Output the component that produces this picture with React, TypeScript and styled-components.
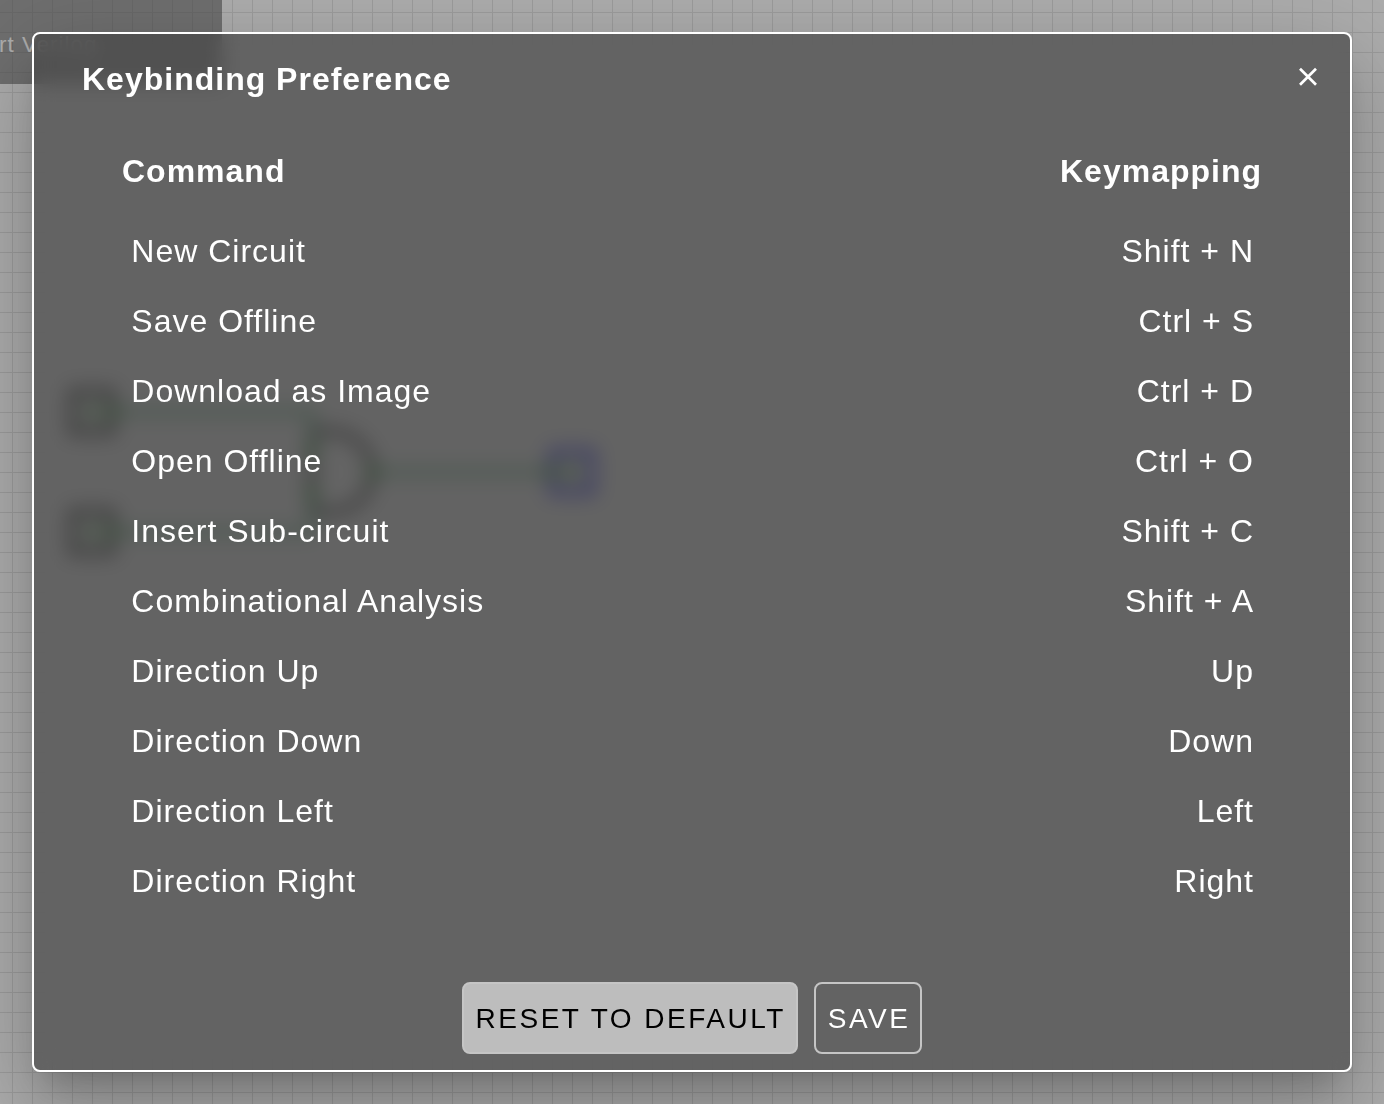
import styled, { createGlobalStyle } from 'styled-components';

interface Keybinding {
  command: string;
  keys: string;
}

const keybindings: Keybinding[] = [
  { command: 'New Circuit', keys: 'Shift + N' },
  { command: 'Save Offline', keys: 'Ctrl + S' },
  { command: 'Download as Image', keys: 'Ctrl + D' },
  { command: 'Open Offline', keys: 'Ctrl + O' },
  { command: 'Insert Sub-circuit', keys: 'Shift + C' },
  { command: 'Combinational Analysis', keys: 'Shift + A' },
  { command: 'Direction Up', keys: 'Up' },
  { command: 'Direction Down', keys: 'Down' },
  { command: 'Direction Left', keys: 'Left' },
  { command: 'Direction Right', keys: 'Right' },
];

const GlobalStyle = createGlobalStyle`
  * {
    box-sizing: border-box;
  }

  body {
    margin: 0;
    overflow: hidden;
    font-family: 'Liberation Sans', Arial, sans-serif;
  }
`;

const Page = styled.div`
  position: relative;
  width: 100vw;
  height: 100vh;
  overflow: hidden;
  background-color: #ffffff;
  background-image: linear-gradient(to right, #e6e6e6 1px, transparent 1px),
    linear-gradient(to bottom, #e6e6e6 1px, transparent 1px);
  background-size: 20px 20px;
  background-position: 12px 12px;
`;

const Circuit = styled.svg`
  position: absolute;
  inset: 0;
  width: 100%;
  height: 100%;
`;

const Menu = styled.div`
  position: absolute;
  top: 0;
  left: 0;
  width: 222px;
  height: 84px;
  padding-top: 31px;
  overflow: hidden;
  background: rgba(104, 104, 104, 0.6);
`;

const MenuItem = styled.span`
  display: block;
  margin-left: -56px;
  font-size: 22.4px;
  line-height: 28px;
  letter-spacing: 1px;
  white-space: nowrap;
  color: #ffffff;
`;

const Overlay = styled.div`
  position: absolute;
  inset: 0;
  display: flex;
  padding: 32px;
  background: rgba(0, 0, 0, 0.32);
`;

const Dialog = styled.div`
  display: flex;
  flex-direction: column;
  flex: 1;
  border: 2px solid #ffffff;
  border-radius: 8px;
  background: rgba(68, 68, 68, 0.7);
  backdrop-filter: blur(10px);
  box-shadow: 0 22px 30px -14px rgba(0, 0, 0, 0.2),
    0 48px 76px 6px rgba(0, 0, 0, 0.14), 0 18px 92px 16px rgba(0, 0, 0, 0.12);
  color: #ffffff;
  font-size: 32px;
  letter-spacing: 1px;
`;

const Header = styled.div`
  display: flex;
  justify-content: space-between;
  height: 97px;
  padding: 25px 32px 0 48px;
`;

const Title = styled.h1`
  margin: 0;
  font-size: 32px;
  font-weight: 700;
  line-height: 40px;
`;

const CloseButton = styled.button`
  display: flex;
  height: 20px;
  margin-top: 8px;
  padding: 0;
  border: 0;
  background: none;
  color: #ffffff;
`;

const TableHead = styled.div`
  display: flex;
  justify-content: space-between;
  height: 85px;
  padding: 20px 88px 0;
  font-weight: 700;
  line-height: 40px;
`;

const List = styled.div`
  flex: 1;
  padding: 0 96px 0 97.3px;
`;

const Row = styled.div`
  display: flex;
  align-items: center;
  justify-content: space-between;
  height: 70px;
`;

const Actions = styled.div`
  display: flex;
  justify-content: center;
  gap: 16px;
  padding-bottom: 16px;
`;

const Button = styled.button<{ $filled?: boolean }>`
  height: 72px;
  padding: 2px 10px 0 12px;
  border: 2px solid #c5c5c5;
  border-radius: 8px;
  background: ${({ $filled }) => ($filled ? '#bdbdbd' : 'transparent')};
  color: ${({ $filled }) => ($filled ? '#000000' : '#ffffff')};
  font-family: inherit;
  font-size: 28px;
  letter-spacing: 2.5px;
  white-space: nowrap;
`;

function CircuitDrawing() {
  return (
    <Circuit viewBox="0 0 1384 1104" fill="none">
      <g stroke="#000000" strokeWidth="6" fill="#ffffff">
        <rect x="72" y="392" width="40" height="40" />
        <rect x="72" y="512" width="40" height="40" />
        <path d="M312 432H332A40 40 0 0 1 332 512H312Z" />
      </g>

      <rect x="552" y="452" width="40" height="40" stroke="#0000ff" strokeWidth="6" fill="#ffffff" />

      <g stroke="#008830" strokeWidth="4">
        <path d="M112 412H312V452" />
        <path d="M112 532H312V492" />
        <path d="M372 472H552" />
      </g>

      <g fill="#008000">
        <circle cx="112" cy="412" r="6" />
        <circle cx="112" cy="532" r="6" />
        <circle cx="312" cy="452" r="6" />
        <circle cx="312" cy="492" r="6" />
        <circle cx="372" cy="472" r="6" />
        <circle cx="552" cy="472" r="6" />
      </g>

      <g stroke="#008000" strokeWidth="3">
        <ellipse cx="92" cy="412" rx="5" ry="8" />
        <ellipse cx="92" cy="532" rx="5" ry="8" />
        <ellipse cx="572" cy="472" rx="5" ry="8" />
      </g>
    </Circuit>
  );
}

export function KeybindingDialog() {
  return (
    <Dialog role="dialog">
      <Header>
        <Title>Keybinding Preference</Title>

        <CloseButton aria-label="Close">
          <svg width="20" height="20" viewBox="0 0 20 20" stroke="currentColor" strokeWidth="2.7">
            <path d="M2 1.8L18 17.8M18 1.8L2 17.8" />
          </svg>
        </CloseButton>
      </Header>

      <TableHead>
        <span>Command</span>
        <span>Keymapping</span>
      </TableHead>

      <List>
        {keybindings.map(({ command, keys }) => (
          <Row key={command}>
            <span>{command}</span>
            <span>{keys}</span>
          </Row>
        ))}
      </List>

      <Actions>
        <Button $filled>RESET TO DEFAULT</Button>
        <Button>SAVE</Button>
      </Actions>
    </Dialog>
  );
}

export default function App() {
  return (
    <Page>
      <GlobalStyle />
      <CircuitDrawing />

      <Menu>
        <MenuItem>Export Verilog</MenuItem>
      </Menu>

      <Overlay>
        <KeybindingDialog />
      </Overlay>
    </Page>
  );
}
